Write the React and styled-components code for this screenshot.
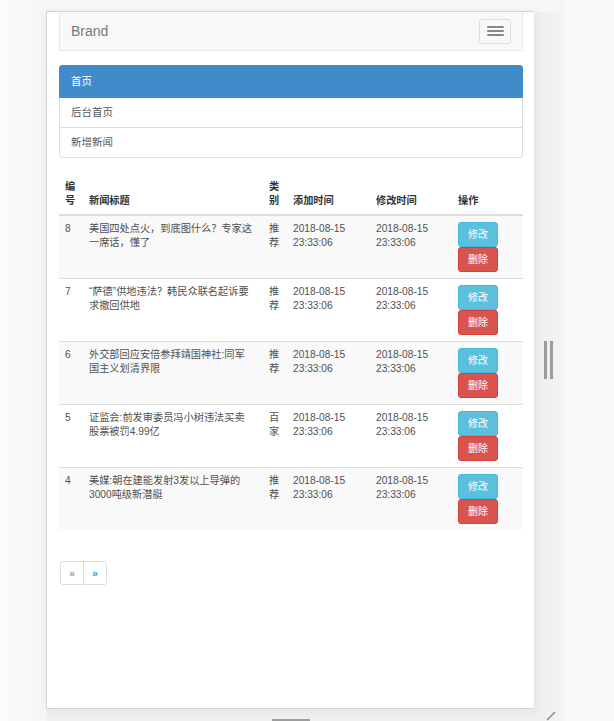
import styled, { createGlobalStyle } from 'styled-components';

const GlobalStyle = createGlobalStyle`
  html, body {
    margin: 0;
    padding: 0;
    height: 721px;
    overflow: hidden;
    background: #f9f9f9;
    font-family: "Liberation Sans", "Noto Sans CJK SC", sans-serif;
  }
`;

const news = [
  { id: 8, title: '美国四处点火，到底图什么？专家这一席话，懂了', type: '推荐' },
  { id: 7, title: '“萨德”供地违法？韩民众联名起诉要求撤回供地', type: '推荐' },
  { id: 6, title: '外交部回应安倍参拜靖国神社:同军国主义划清界限', type: '推荐' },
  { id: 5, title: '证监会:前发审委员冯小树违法买卖股票被罚4.99亿', type: '百家' },
  { id: 4, title: '美媒:朝在建能发射3发以上导弹的3000吨级新潜艇', type: '推荐' },
];

const time = '2018-08-15 23:33:06';

const App = () => {
  return (
    <>
      <GlobalStyle />
      <Stage>
        <Device>
          <Viewport>
            <Navbar>
              <span className="brand">Brand</span>
              <Toggle>
                <i />
                <i />
                <i />
              </Toggle>
            </Navbar>

            <ListGroup>
              <ListItem active>首页</ListItem>
              <ListItem>后台首页</ListItem>
              <ListItem>新增新闻</ListItem>
            </ListGroup>

            <NewsTable>
              <colgroup>
                <col style={{ width: 24 }} />
                <col style={{ width: 180 }} />
                <col style={{ width: 24 }} />
                <col style={{ width: 83 }} />
                <col style={{ width: 82 }} />
                <col style={{ width: 71 }} />
              </colgroup>
              <thead>
                <tr>
                  <th>编号</th>
                  <th>新闻标题</th>
                  <th>类别</th>
                  <th>添加时间</th>
                  <th>修改时间</th>
                  <th>操作</th>
                </tr>
              </thead>
              <tbody>
                {news.map((n) => (
                  <tr key={n.id}>
                    <td>{n.id}</td>
                    <td className="title">{n.title}</td>
                    <td>{n.type}</td>
                    <td>{time}</td>
                    <td>{time}</td>
                    <td>
                      <ActionButton variant="info">修改</ActionButton>
                      <ActionButton variant="danger">删除</ActionButton>
                    </td>
                  </tr>
                ))}
              </tbody>
            </NewsTable>

            <Pager>
              <PageLink>»</PageLink>
              <PageLink active>»</PageLink>
            </Pager>
          </Viewport>

          <SideStrip>
            <Grip />
            <Corner width="10" height="10" viewBox="0 0 10 10">
              <path d="M9 1 L1 9" stroke="#8a8a8a" strokeWidth="1.4" />
            </Corner>
          </SideStrip>

          <BottomStrip>
            <BottomGrip />
          </BottomStrip>
        </Device>
      </Stage>
    </>
  );
};

export default App;

const Stage = styled.div`
  padding: 11px 0 0 46px;
  height: 721px;
  box-sizing: border-box;
  background: linear-gradient(to right, #fbfbfb 0, #f6f6f6 46px, #f6f6f6 563px, #fafafa 570px);
`;

const Device = styled.div`
  display: grid;
  grid-template-columns: 488px 29px;
  grid-template-rows: 698px 12px;
`;

const Viewport = styled.div`
  grid-column: 1;
  grid-row: 1;
  box-sizing: border-box;
  height: 698px;
  background: #fff;
  border: 1px solid #d4d4d4;
  border-right: none;
  padding: 0 11px 0 12px;
  overflow: hidden;
  box-shadow: 0 2px 10px rgba(0, 0, 0, 0.06);
  position: relative;
  z-index: 1;
`;

const Navbar = styled.div`
  display: flex;
  align-items: center;
  justify-content: space-between;
  height: 38px;
  padding: 0 11px;
  background: #f8f8f8;
  border: 1px solid #e7e7e7;
  border-top: none;

  .brand {
    font-size: 14px;
    color: #777;
  }
`;

const Toggle = styled.div`
  box-sizing: border-box;
  width: 32px;
  height: 25px;
  border: 1px solid #ddd;
  border-radius: 3px;
  display: flex;
  flex-direction: column;
  align-items: center;
  justify-content: center;
  gap: 2px;

  i {
    display: block;
    width: 17px;
    height: 2px;
    background: #888;
    border-radius: 1px;
  }
`;

const ListGroup = styled.div`
  margin-top: 14px;
  display: flex;
  flex-direction: column;
`;

const ListItem = styled.div`
  font-size: 10.5px;
  line-height: 13px;
  padding: ${(p) => (p.active ? '9px 11px' : '8px 11px')};
  margin-bottom: -1px;
  border: 1px solid ${(p) => (p.active ? '#428bca' : '#ddd')};
  background: ${(p) => (p.active ? '#428bca' : '#fff')};
  color: ${(p) => (p.active ? '#fff' : '#555')};
  position: relative;
  z-index: ${(p) => (p.active ? 2 : 1)};

  &:first-child {
    border-radius: 3px 3px 0 0;
  }
  &:last-child {
    border-radius: 0 0 3px 3px;
    margin-bottom: 0;
  }
`;

const NewsTable = styled.table`
  margin-top: 16px;
  width: 464px;
  table-layout: fixed;
  border-collapse: collapse;
  font-size: 10.2px;
  line-height: 14px;
  color: #333;

  th {
    text-align: left;
    font-weight: bold;
    vertical-align: bottom;
    padding: 6px;
    border-bottom: 2px solid #ddd;
  }

  td {
    vertical-align: top;
    padding: 6px;
    border-top: 1px solid #ddd;
    color: #505050;
  }

  td.title {
    padding-right: 9px;
  }

  tbody tr:nth-child(odd) td {
    background: #f9f9f9;
  }
`;

const ActionButton = styled.div`
  box-sizing: border-box;
  width: 40px;
  height: 25px;
  display: flex;
  align-items: center;
  justify-content: center;
  font-size: 10px;
  color: #fff;
  border-radius: 3px;
  background: ${(p) => (p.variant === 'danger' ? '#d9534f' : '#5bc0de')};
  border: 1px solid ${(p) => (p.variant === 'danger' ? '#d43f3a' : '#46b8da')};
`;

const Pager = styled.div`
  margin-top: 31px;
  margin-left: 1px;
  display: flex;
`;

const PageLink = styled.div`
  box-sizing: border-box;
  width: 24px;
  height: 24px;
  display: flex;
  align-items: center;
  justify-content: center;
  font-size: 10px;
  font-weight: bold;
  color: ${(p) => (p.active ? '#428bca' : '#999')};
  border: 1px solid #ddd;
  margin-left: -1px;

  &:first-child {
    margin-left: 0;
    border-radius: 3px 0 0 3px;
  }
  &:last-child {
    border-radius: 0 3px 3px 0;
  }
`;

const SideStrip = styled.div`
  grid-column: 2;
  grid-row: 1 / span 2;
  margin-top: 1px;
  background: linear-gradient(to right, #ededed, #f1f1f1 60%, #f3f3f3);
  position: relative;
  display: flex;
  flex-direction: column;
  align-items: flex-start;
  padding-left: 10px;
  padding-top: 329px;
`;

const Grip = styled.div`
  width: 9px;
  height: 38px;
  background: linear-gradient(to right, #9c9c9c 0, #9c9c9c 3px, transparent 3px, transparent 6px, #9c9c9c 6px);
`;

const Corner = styled.svg`
  position: absolute;
  left: 12px;
  bottom: 0;
`;

const BottomStrip = styled.div`
  grid-column: 1;
  grid-row: 2;
  margin-left: 1px;
  background: #efefef;
  display: flex;
  align-items: flex-end;
  padding-left: 225px;
`;

const BottomGrip = styled.div`
  width: 38px;
  height: 2px;
  background: #9c9c9c;
`;
